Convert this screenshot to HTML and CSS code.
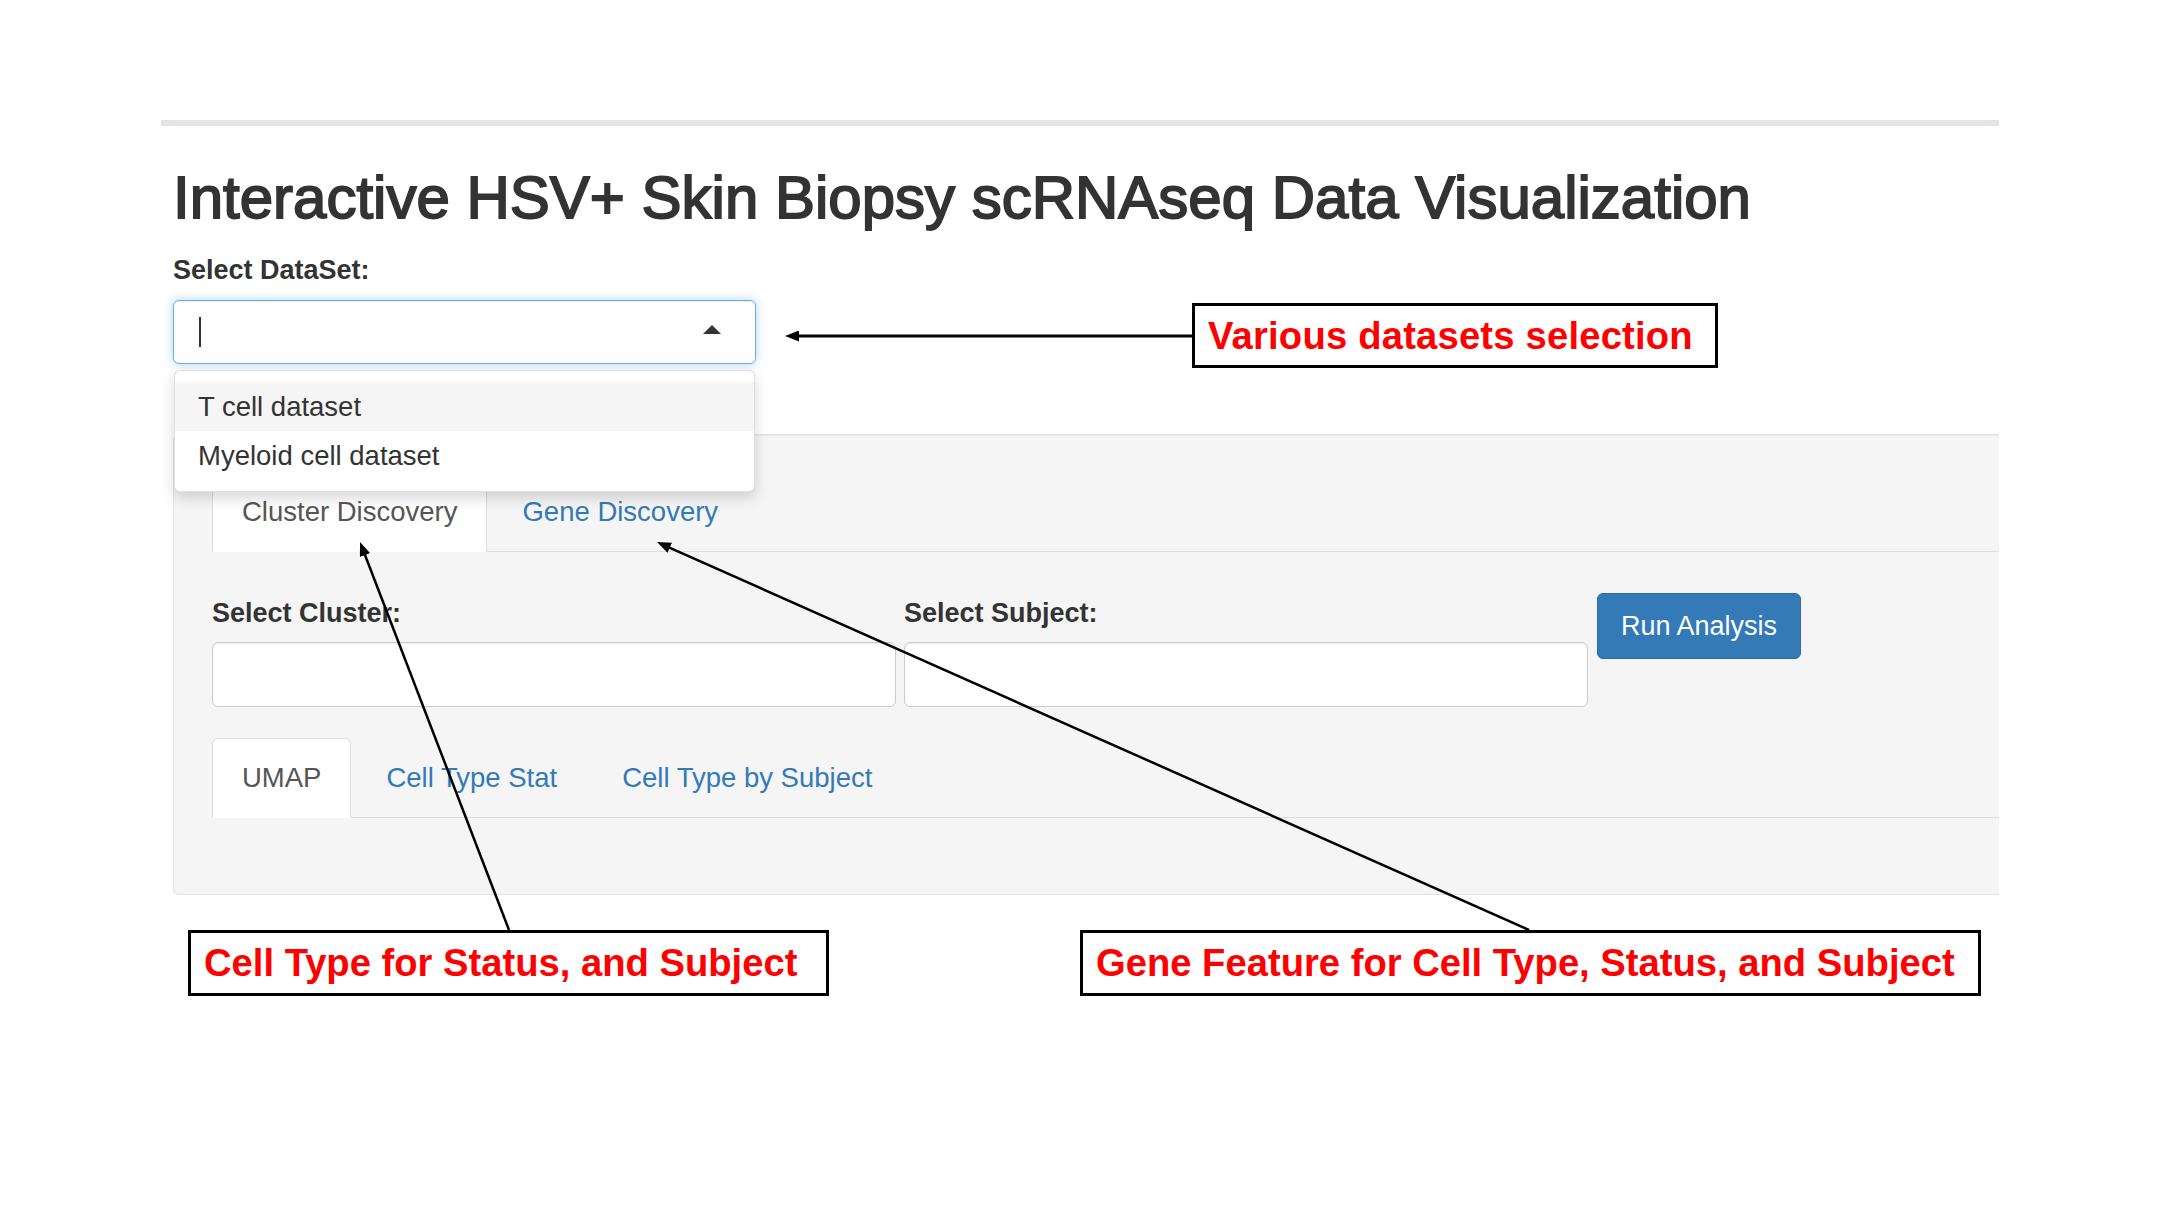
FILE: index.html
```html
<!DOCTYPE html>
<html>
<head>
<meta charset="utf-8">
<title>Interactive HSV+ Skin Biopsy scRNAseq Data Visualization</title>
<link rel="stylesheet" href="styles.css">
</head>
<body>
<div class="slide">
  <div class="shot">
    <div class="topbar"></div>
    <div class="container">
      <h1 class="title">Interactive HSV+ Skin Biopsy scRNAseq Data Visualization</h1>
      <label class="lbl lbl-dataset">Select DataSet:</label>
      <div class="selectize">
        <div class="selectize-input"><span class="cursor"></span><span class="caret"></span></div>
        <div class="dropdown">
          <div class="opt active">T cell dataset</div>
          <div class="opt">Myeloid cell dataset</div>
        </div>
      </div>
      <div class="well">
        <ul class="tabs">
          <li class="tab active">Cluster Discovery</li>
          <li class="tab">Gene Discovery</li>
        </ul>
        <div class="controls">
          <div class="field"><label class="lbl">Select Cluster:</label><div class="input"></div></div>
          <div class="field field-2"><label class="lbl">Select Subject:</label><div class="input"></div></div>
          <button class="btn">Run Analysis</button>
        </div>
        <ul class="tabs tabs-sub">
          <li class="tab active">UMAP</li>
          <li class="tab">Cell Type Stat</li>
          <li class="tab">Cell Type by Subject</li>
        </ul>
      </div>
    </div>
  </div>

  <svg class="arrows" width="2160" height="1215" viewBox="0 0 2160 1215">
    <defs>
      <marker id="ah" viewBox="0 0 14 11" refX="6" refY="5.5" markerWidth="14" markerHeight="11" markerUnits="userSpaceOnUse" orient="auto">
        <path d="M0,0 L14,5.5 L0,11 z" fill="#000"/>
      </marker>
    </defs>
    <line x1="1192" y1="336" x2="793" y2="336" stroke="#000" stroke-width="3" marker-end="url(#ah)"/>
    <line x1="509" y1="930" x2="362.9" y2="549.5" stroke="#000" stroke-width="2.5" marker-end="url(#ah)"/>
    <line x1="1529" y1="930" x2="664.3" y2="545.3" stroke="#000" stroke-width="2.5" marker-end="url(#ah)"/>
  </svg>

  <div class="note note-1">Various datasets selection</div>
  <div class="note note-2">Cell Type for Status, and Subject</div>
  <div class="note note-3">Gene Feature for Cell Type, Status, and Subject</div>
</div>
</body>
</html>
```

FILE: styles.css
```css
* {
  box-sizing: border-box;
}

html, body {
  margin: 0;
  padding: 0;
  background: #ffffff;
}

body {
  font-family: "Liberation Sans", Arial, Helvetica, sans-serif;
  color: #333333;
}

.slide {
  position: relative;
  width: 2160px;
  height: 1215px;
  overflow: hidden;
  background: #ffffff;
}

.shot {
  margin-left: 161px;
  width: 1838px;
  padding-top: 120px;
  overflow: hidden;
}

.topbar {
  height: 6px;
  background: #e4e5e8;
}

.container {
  padding-left: 12px;
}

.title {
  margin: 39px 0 0;
  font-size: 60px;
  line-height: 66px;
  font-weight: 400;
  color: #333333;
  -webkit-text-stroke: 1.8px #333333;
  white-space: nowrap;
}

.lbl {
  display: block;
  font-size: 27px;
  line-height: 30px;
  font-weight: bold;
  color: #333333;
}

.lbl-dataset {
  margin-top: 24px;
}

.selectize {
  position: relative;
  margin-top: 15px;
  width: 583px;
  z-index: 5;
}

.selectize-input {
  position: relative;
  height: 64px;
  background: #ffffff;
  border: 1px solid #66afe9;
  border-radius: 6px;
  box-shadow: inset 0 1px 1px rgba(0, 0, 0, 0.075), 0 0 10px rgba(102, 175, 233, 0.55);
}

.cursor {
  position: absolute;
  left: 25px;
  top: 16px;
  width: 2px;
  height: 30px;
  background: #333333;
}

.caret {
  position: absolute;
  left: 529px;
  top: 24px;
  width: 0;
  height: 0;
  border-left: 9px solid transparent;
  border-right: 9px solid transparent;
  border-bottom: 9px solid #333333;
}

.dropdown {
  position: absolute;
  top: 70px;
  left: 1px;
  right: 1px;
  background: #ffffff;
  border: 1px solid rgba(0, 0, 0, 0.12);
  border-radius: 6px;
  box-shadow: 0 6px 14px rgba(0, 0, 0, 0.16);
  padding: 11px 0 11px;
}

.opt {
  font-size: 27.5px;
  line-height: 49px;
  padding-left: 23px;
  color: #333333;
}

.opt.active {
  background: #f5f5f5;
}

.well {
  margin-top: 70px;
  width: 1900px;
  background: #f5f5f5;
  border: 1px solid #e3e3e3;
  border-radius: 6px;
  box-shadow: inset 0 1px 1px rgba(0, 0, 0, 0.05);
  padding: 37px 0 76px 38px;
}

.tabs {
  display: flex;
  list-style: none;
  margin: 0;
  padding: 0;
  height: 80px;
  border-bottom: 1px solid #dddddd;
}

.tab {
  font-size: 27.5px;
  line-height: 78px;
  height: 80px;
  padding: 0 29px 0 29px;
  margin-right: 5px;
  margin-bottom: -1px;
  border: 1px solid transparent;
  border-radius: 6px 6px 0 0;
  color: #337ab7;
  white-space: nowrap;
}

.tab.active {
  background: #ffffff;
  border-color: #dddddd #dddddd transparent;
  color: #555555;
}

.controls {
  display: flex;
  align-items: flex-start;
  margin-top: 41px;
}

.field {
  width: 684px;
  margin-right: 8px;
}

.field .lbl {
  margin-top: 5px;
}

.field-2 {
  margin-right: 9px;
}

.input {
  margin-top: 14px;
  height: 65px;
  background: #ffffff;
  border: 1px solid #cccccc;
  border-radius: 6px;
  box-shadow: inset 0 1px 1px rgba(0, 0, 0, 0.075);
}

.btn {
  width: 204px;
  height: 66px;
  padding: 0;
  background: #337ab7;
  border: 1px solid #2e6da4;
  border-radius: 6px;
  color: #ffffff;
  font-family: "Liberation Sans", Arial, Helvetica, sans-serif;
  font-size: 27px;
  line-height: 64px;
}

.tabs-sub {
  margin-top: 31px;
}

.arrows {
  position: absolute;
  left: 0;
  top: 0;
  z-index: 20;
  pointer-events: none;
}

.note {
  position: absolute;
  z-index: 30;
  background: #ffffff;
  border: 3px solid #000000;
  color: #ff0000;
  font-family: "Liberation Sans", Arial, sans-serif;
  font-weight: bold;
  font-size: 38.2px;
  padding-left: 13px;
  white-space: nowrap;
}

.note-1 {
  left: 1192px;
  top: 303px;
  width: 526px;
  height: 65px;
  line-height: 59px;
  letter-spacing: 0.2px;
}

.note-2 {
  left: 188px;
  top: 930px;
  width: 641px;
  height: 66px;
  line-height: 60px;
}

.note-3 {
  left: 1080px;
  top: 930px;
  width: 901px;
  height: 66px;
  line-height: 60px;
}
```
